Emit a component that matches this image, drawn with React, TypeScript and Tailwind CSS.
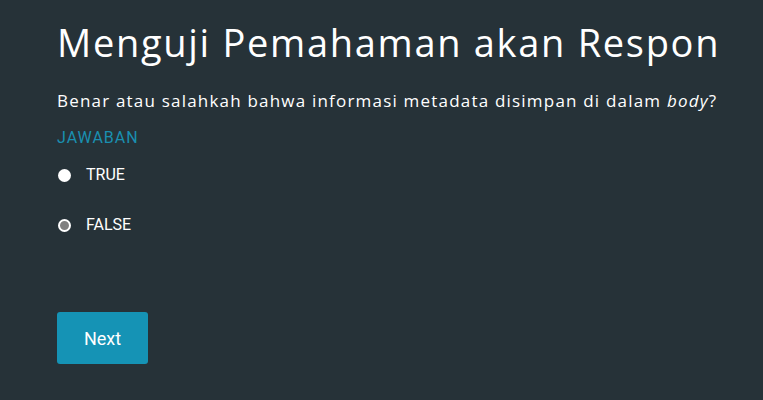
export default function App() {
  return (
    <div className="w-[763px] h-[400px] bg-[#263238] overflow-hidden">
      <div className="pl-[57px] pt-[16px]">
        <h1 className="text-white text-[38px] leading-[52px] font-normal tracking-[1.7px] [font-family:'Open_Sans',sans-serif]">
          Menguji Pemahaman akan Respon
        </h1>
        <p className="mt-[21px] text-white text-[17px] leading-[24px] tracking-[1.2px] [font-family:'Open_Sans',sans-serif]">
          Benar atau salahkah bahwa informasi metadata disimpan di dalam <em>body</em>?
        </p>
        <div className="mt-[15px] text-[#1a8fb0] text-[16px] leading-[20px] tracking-[1px] [font-family:Roboto,sans-serif]">
          JAWABAN
        </div>
        <div className="mt-[17px] flex items-center h-[20px] gap-[15px] pl-[1px]">
          <span className="w-[13px] h-[13px] rounded-full bg-white" />
          <span className="text-white text-[16px] [font-family:Roboto,sans-serif]">TRUE</span>
        </div>
        <div className="mt-[30px] flex items-center h-[20px] gap-[15px] pl-[1px]">
          <span className="w-[13px] h-[13px] rounded-full bg-[#808080] border-[2px] border-white" />
          <span className="text-white text-[16px] [font-family:Roboto,sans-serif]">FALSE</span>
        </div>
        <button className="mt-[77px] w-[91px] h-[52px] rounded-[3px] bg-[#1593b5] text-white text-[18px] [font-family:Roboto,sans-serif]">
          Next
        </button>
      </div>
    </div>
  );
}
